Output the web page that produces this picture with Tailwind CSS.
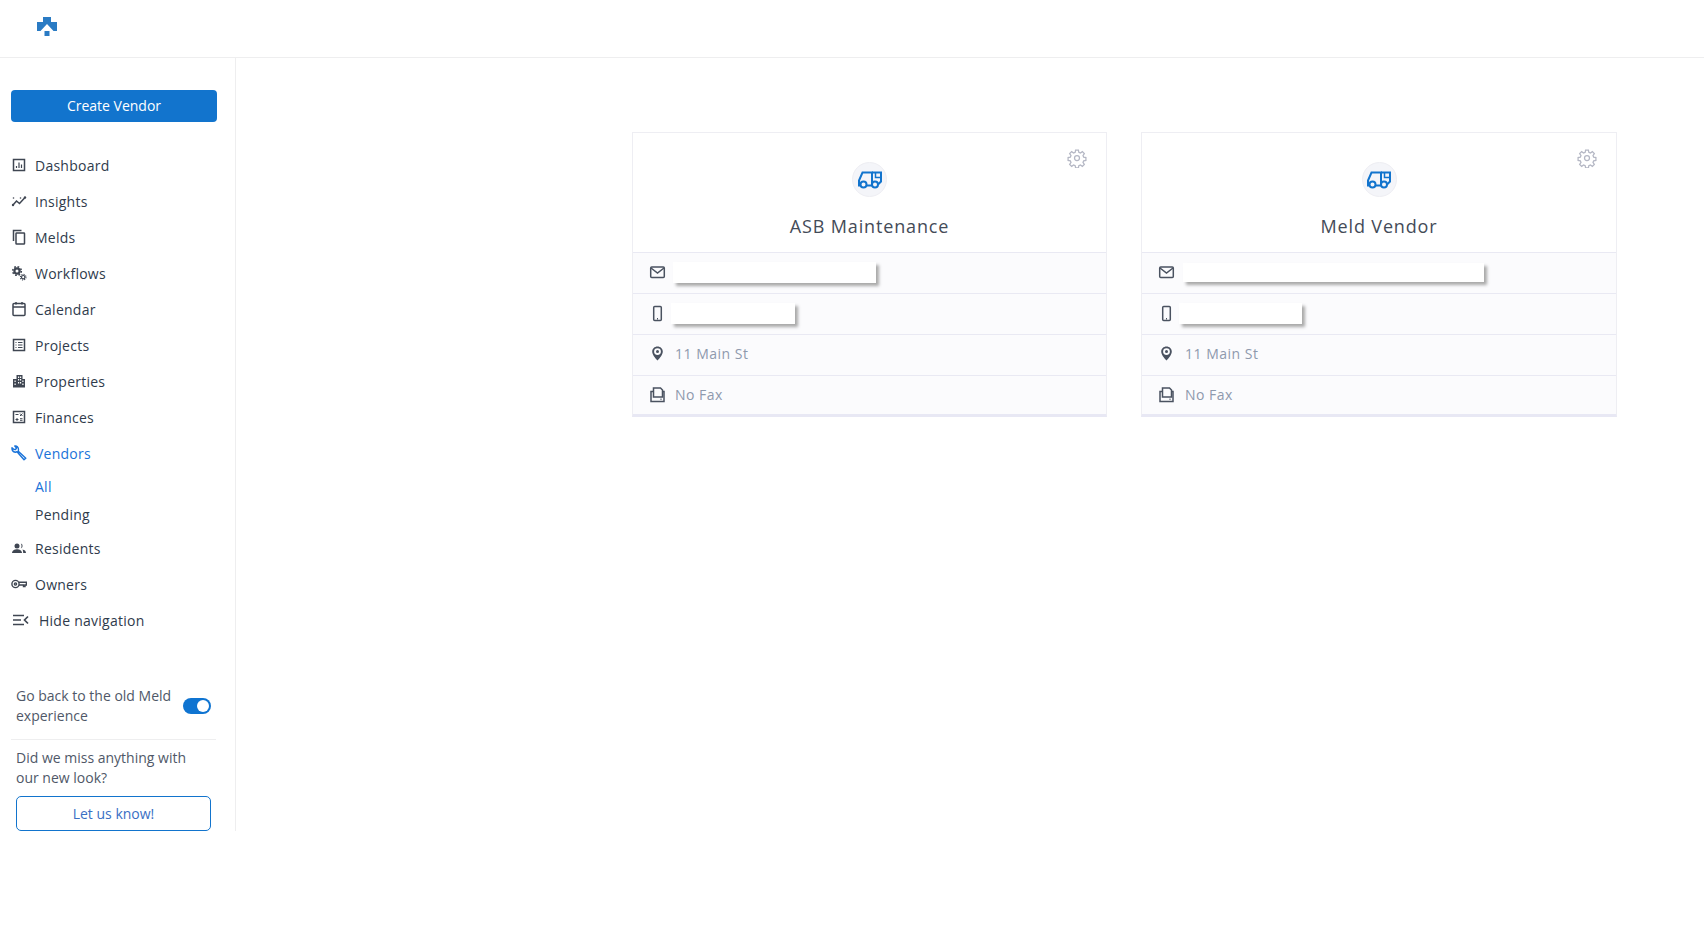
<!DOCTYPE html>
<html lang="en">
    <head>
        <meta charset="UTF-8" />
        <meta name="viewport" content="width=device-width, initial-scale=1.0" />
        <script src="https://cdn.jsdelivr.net/npm/@tailwindcss/browser@4"></script>
        <title>Vendors</title>
    </head>
    <body class="bg-white font-['Open_Sans',sans-serif] text-[14px] text-[#2f3b4c]">
        <header class="h-[58px] border-b border-[#eeeeef] pl-[37px] pt-[17px]">
            <svg class="w-[20px] h-[20px]" viewBox="0 0 20 20" fill="#2a7bc4">
                <path d="M6 0h8v5h6v9h-3.500L10 7 3.500 14H0V5h6z" />
                <rect x="7.500" y="14" width="5" height="5" />
            </svg>
        </header>

        <div class="flex items-start">
            <aside class="w-[236px] h-[773px] shrink-0 border-r border-[#eeeeef] flex flex-col">
                <button class="mt-[32px] ml-[11px] w-[206px] h-[32px] pb-[2px] rounded-[4px] bg-[#1274cd] text-white text-[14px] font-medium">
                    Create Vendor
                </button>

                <nav class="mt-[25px] flex flex-col text-[14px] font-medium tracking-[0.25px]">
                    <a class="h-[36px] flex items-center pl-[11px] gap-[8px]">
                        <svg class="w-[16px] h-[16px] text-[#3f4652]" viewBox="0 0 16 16" fill="none" stroke="currentColor">
                            <rect x="2.500" y="2.500" width="11" height="11" stroke-width="1.500" />
                            <path d="M5.500 11V9M8 11V5.500M10.500 11V7.500" stroke-width="1.200" />
                        </svg>
                        Dashboard
                    </a>
                    <a class="h-[36px] flex items-center pl-[11px] gap-[8px]">
                        <svg class="w-[16px] h-[16px] text-[#3f4652]" viewBox="0 0 16 16" fill="none" stroke="currentColor">
                            <path d="M2 12 5.500 8l3 2.500L14 4.500" stroke-width="1.500" />
                            <circle cx="2" cy="12" r="1.200" fill="currentColor" stroke="none" />
                            <circle cx="14" cy="4.500" r="1.200" fill="currentColor" stroke="none" />
                            <circle cx="2.500" cy="5" r=".8" fill="currentColor" stroke="none" />
                            <circle cx="9.500" cy="5" r=".8" fill="currentColor" stroke="none" />
                        </svg>
                        Insights
                    </a>
                    <a class="h-[36px] flex items-center pl-[11px] gap-[8px]">
                        <svg class="w-[16px] h-[16px] text-[#3f4652]" viewBox="0 0 16 16" fill="none" stroke="currentColor" stroke-width="1.500">
                            <path d="M2.500 12V1.500h8" />
                            <rect x="5" y="4" width="8.500" height="11" rx=".6" />
                        </svg>
                        Melds
                    </a>
                    <a class="h-[36px] flex items-center pl-[11px] gap-[8px]">
                        <svg class="w-[16px] h-[16px] text-[#3f4652]" viewBox="0 0 16 16" fill="none" stroke="currentColor">
                            <circle cx="6" cy="6" r="2.600" stroke-width="2.200" />
                            <circle cx="6" cy="6" r="4.300" stroke-width="1.600" stroke-dasharray="1.700 1.680" />
                            <circle cx="12.200" cy="12.200" r="1.700" stroke-width="1.200" />
                            <circle cx="12.200" cy="12.200" r="2.800" stroke-width="1.100" stroke-dasharray="1.100 1.100" />
                        </svg>
                        Workflows
                    </a>
                    <a class="h-[36px] flex items-center pl-[11px] gap-[8px]">
                        <svg class="w-[16px] h-[16px] text-[#3f4652]" viewBox="0 0 16 16" fill="none" stroke="currentColor" stroke-width="1.500">
                            <rect x="2" y="2.500" width="12" height="12" rx="1" />
                            <path d="M2 6h12M5 1v2.500M11 1v2.500" />
                        </svg>
                        Calendar
                    </a>
                    <a class="h-[36px] flex items-center pl-[11px] gap-[8px]">
                        <svg class="w-[16px] h-[16px] text-[#3f4652]" viewBox="0 0 16 16" fill="none" stroke="currentColor">
                            <rect x="2.500" y="2.500" width="11" height="11" stroke-width="1.500" />
                            <path d="M4.500 5.500h1M7 5.500h4.500M4.500 8h1M7 8h4.500M4.500 10.500h1M7 10.500h4.500" stroke-width="1.200" />
                        </svg>
                        Projects
                    </a>
                    <a class="h-[36px] flex items-center pl-[11px] gap-[8px]">
                        <svg class="w-[16px] h-[16px] text-[#3f4652]" viewBox="0 0 16 16" fill="currentColor">
                            <path fill-rule="evenodd" d="M5.500 2h6v4H14v8.500H2V6h3.500zM7 3.500v1.500h1.200V3.500zm2 0v1.500h1.200V3.500zM7 6v1.500h1.200V6zm2 0v1.500h1.200V6zM3.500 7.500V9h1.200V7.500zM7 9v1.500h1.200V9zm2 0v1.500h1.200V9zm2.300-1.500V9h1.200V7.500zM3.500 10.500V12h1.200v-1.500zm7.800 0V12h1.200v-1.500z" />
                        </svg>
                        Properties
                    </a>
                    <a class="h-[36px] flex items-center pl-[11px] gap-[8px]">
                        <svg class="w-[16px] h-[16px] text-[#3f4652]" viewBox="0 0 16 16" fill="none" stroke="currentColor">
                            <rect x="2.500" y="2.500" width="11" height="11" stroke-width="1.500" />
                            <path d="M4.500 5.500h3M9 4.500l2.500 2.500M11.500 4.500 9 7M4.500 10.500h3M6 9v3M9 9.700h2.500M9 11.300h2.500" stroke-width="1" />
                        </svg>
                        Finances
                    </a>
                    <a class="h-[36px] flex items-center pl-[11px] gap-[8px] text-[#1a73d9]">
                        <svg class="w-[16px] h-[16px]" viewBox="0 0 16 16" fill="none" stroke="currentColor" stroke-width="1.400" stroke-linejoin="round">
                            <path d="M3.800 1 5.500 3 4.500 4.500l-1.800-.2L1 2.800C.8 5 1.800 7 4.300 7.200L6 6.800l7 8 1.800-1.600-7.500-7 .2-1.700C7.500 2.200 5.800.6 3.800 1z" />
                        </svg>
                        Vendors
                    </a>
                    <a class="h-[28px] mt-[1px] flex items-center pl-[35px] text-[#1a73d9]">All</a>
                    <a class="h-[28px] flex items-center pl-[35px]">Pending</a>
                    <a class="h-[36px] mt-[2px] flex items-center pl-[11px] gap-[8px]">
                        <svg class="w-[16px] h-[16px] text-[#3f4652]" viewBox="0 0 16 16" fill="currentColor">
                            <circle cx="6" cy="6" r="2.500" />
                            <path d="M1 13c0-2.500 2.500-3.800 5-3.800s5 1.300 5 3.800z" />
                            <path d="M9.800 3.600a2.500 2.500 0 0 1 0 4.800c1-1.400 1-3.400 0-4.800zM11.500 9.400c2 .3 3.500 1.400 3.500 3.600h-2.800c0-1.500-.2-2.700-.7-3.600z" />
                        </svg>
                        Residents
                    </a>
                    <a class="h-[36px] flex items-center pl-[11px] gap-[8px]">
                        <svg class="w-[16px] h-[16px] text-[#3f4652]" viewBox="0 0 16 16" fill="none" stroke="currentColor" stroke-width="1.400">
                            <circle cx="4.500" cy="8" r="3.600" />
                            <circle cx="4.500" cy="8" r="1.100" />
                            <path d="M8 6.300h7.400V9H14v1.500h-1.500V9H8" />
                        </svg>
                        Owners
                    </a>
                    <a class="h-[36px] flex items-center pl-[12px] gap-[10px]">
                        <svg class="w-[17px] h-[16px] text-[#3f4652]" viewBox="0 0 17 16" fill="none" stroke="currentColor" stroke-width="1.700">
                            <path d="M1 3.500h11M1 8h8M1 12.500h11M16 4.500 12.500 8l3.500 3.500" />
                        </svg>
                        Hide navigation
                    </a>
                </nav>

                <div class="mt-auto ml-[11px] mr-[19px] flex flex-col text-[#4f5868] leading-[20px]">
                    <div class="flex items-center justify-between px-[5px] pb-[13px] border-b border-[#eeeeef]">
                        <span class="w-[160px]">Go back to the old Meld experience</span>
                        <span class="w-[28px] h-[16px] rounded-full bg-[#0f74d1] flex items-center justify-end pr-[2px]">
                            <span class="w-[12px] h-[12px] rounded-full bg-white"></span>
                        </span>
                    </div>
                    <p class="mt-[8px] px-[5px]">Did we miss anything with our new look?</p>
                    <button class="mt-[8px] ml-[5px] w-[195px] h-[35px] rounded-[5px] border border-[#1274cd] text-[#3a6fc4] text-[14px]">
                        Let us know!
                    </button>
                </div>
            </aside>

            <main class="flex-1 pl-[396px] pt-[74px]">
                <div class="w-[985px] grid grid-cols-[475px_476px] gap-[34px]">
                    <section class="h-[285px] border border-[#eeeef3] border-b-[3px] border-b-[#e8e8f4] flex flex-col">
                        <div class="relative h-[119px] flex flex-col items-center">
                            <svg class="absolute right-[19px] top-[15px] w-[20px] h-[20px] text-[#b4b7c4]" viewBox="0 0 24 24" fill="none" stroke="currentColor" stroke-width="1.500">
                                <path d="M10.300 2.500h3.400l.5 2.700 1.900.8 2.300-1.600 2.400 2.400-1.600 2.300.8 1.900 2.700.5v3.400l-2.700.5-.8 1.900 1.600 2.300-2.400 2.400-2.300-1.600-1.900.8-.5 2.700h-3.400l-.5-2.700-1.900-.8-2.300 1.600-2.400-2.400 1.600-2.300-.8-1.900-2.700-.5v-3.400l2.700-.5.8-1.900-1.600-2.300 2.400-2.400 2.300 1.600 1.900-.8z" />
                                <circle cx="12" cy="12" r="3" />
                            </svg>
                            <div class="mt-[29px] w-[35px] h-[35px] rounded-full bg-[#f4f5f9] border border-[#eeeef3] flex items-center justify-center">
                                <svg class="w-[24px] h-[24px] text-[#1274cd]" viewBox="0 0 24 24" fill="none" stroke="currentColor" stroke-width="2">
                                    <path d="M2 17.500H1v-5l3.500-8H14v13H8.500" />
                                    <path d="M14 4.500h9v9l-3 3" />
                                    <path d="M17.500 5v4.500H23" stroke-width="1.500" />
                                    <circle cx="5.500" cy="16.500" r="3" />
                                    <circle cx="17" cy="16.500" r="3" />
                                </svg>
                            </div>
                            <h2 class="mt-[17px] text-[18px] leading-[24px] font-medium tracking-[0.85px] text-[#444b58]">ASB Maintenance</h2>
                        </div>
                        <div class="h-[41px] pb-[2px] border-t border-[#e9e9f3] bg-[#fbfbfd] flex items-center pl-[16px]">
                            <svg class="w-[17px] h-[17px] text-[#4a5260]" viewBox="0 0 17 17" fill="none" stroke="currentColor" stroke-width="1.500">
                                <rect x="1.700" y="3" width="13.600" height="10.500" rx="1" />
                                <path d="M2 4l6.500 5L15 4" />
                            </svg>
                            <span class="ml-[7px] w-[203px] h-[21px] bg-white shadow-[3px_3px_3px_#a9a9a9]"></span>
                        </div>
                        <div class="h-[41px] pb-[2px] border-t border-[#e9e9f3] bg-[#fbfbfd] flex items-center pl-[16px]">
                            <svg class="w-[17px] h-[17px] text-[#4a5260]" viewBox="0 0 17 17" fill="none" stroke="currentColor" stroke-width="1.500">
                                <rect x="4.700" y="1.500" width="7.600" height="14" rx="1" />
                                <path d="M8 13.700h1" />
                            </svg>
                            <span class="ml-[5px] w-[124px] h-[21px] bg-white shadow-[3px_3px_3px_#a9a9a9]"></span>
                        </div>
                        <div class="h-[41px] pb-[3px] border-t border-[#e9e9f3] bg-[#fbfbfd] flex items-center pl-[16px]">
                            <svg class="w-[17px] h-[17px] text-[#4a5260]" viewBox="0 0 17 17" fill="currentColor">
                                <path fill-rule="evenodd" d="M8.500 1.500c3 0 5.300 2.200 5.300 5 0 3-2.800 6.500-5.300 9-2.500-2.500-5.300-6-5.300-9 0-2.800 2.300-5 5.300-5zm0 1.700a3.400 3.400 0 1 0 0 6.800 3.400 3.400 0 0 0 0-6.800z" />
                                <circle cx="8.500" cy="6.600" r="1.500" />
                            </svg>
                            <span class="ml-[9px] text-[#8e99ad] tracking-[0.5px]">11 Main St</span>
                        </div>
                        <div class="flex-1 pb-[1px] border-t border-[#e9e9f3] bg-[#fbfbfd] flex items-center pl-[16px]">
                            <svg class="w-[17px] h-[17px] text-[#4a5260]" viewBox="0 0 17 17" fill="none" stroke="currentColor" stroke-width="1.500">
                                <path d="M4.500 5.500H2v10h13v-10h-1.500" />
                                <path d="M4.500 11V2h7l2 2v7z" />
                                <path d="M11.500 13.200h1" />
                            </svg>
                            <span class="ml-[9px] text-[#8e99ad] tracking-[0.5px]">No Fax</span>
                        </div>
                    </section>

                    <section class="h-[285px] border border-[#eeeef3] border-b-[3px] border-b-[#e8e8f4] flex flex-col">
                        <div class="relative h-[119px] flex flex-col items-center">
                            <svg class="absolute right-[19px] top-[15px] w-[20px] h-[20px] text-[#b4b7c4]" viewBox="0 0 24 24" fill="none" stroke="currentColor" stroke-width="1.500">
                                <path d="M10.300 2.500h3.400l.5 2.700 1.900.8 2.300-1.600 2.400 2.400-1.600 2.300.8 1.900 2.700.5v3.400l-2.700.5-.8 1.900 1.600 2.300-2.400 2.400-2.300-1.600-1.900.8-.5 2.700h-3.400l-.5-2.700-1.900-.8-2.300 1.600-2.400-2.400 1.600-2.300-.8-1.900-2.700-.5v-3.400l2.700-.5.8-1.900-1.600-2.300 2.400-2.400 2.300 1.600 1.900-.8z" />
                                <circle cx="12" cy="12" r="3" />
                            </svg>
                            <div class="mt-[29px] w-[35px] h-[35px] rounded-full bg-[#f4f5f9] border border-[#eeeef3] flex items-center justify-center">
                                <svg class="w-[24px] h-[24px] text-[#1274cd]" viewBox="0 0 24 24" fill="none" stroke="currentColor" stroke-width="2">
                                    <path d="M2 17.500H1v-5l3.500-8H14v13H8.500" />
                                    <path d="M14 4.500h9v9l-3 3" />
                                    <path d="M17.500 5v4.500H23" stroke-width="1.500" />
                                    <circle cx="5.500" cy="16.500" r="3" />
                                    <circle cx="17" cy="16.500" r="3" />
                                </svg>
                            </div>
                            <h2 class="mt-[17px] text-[18px] leading-[24px] font-medium tracking-[0.85px] text-[#444b58]">Meld Vendor</h2>
                        </div>
                        <div class="h-[41px] pb-[2px] border-t border-[#e9e9f3] bg-[#fbfbfd] flex items-center pl-[16px]">
                            <svg class="w-[17px] h-[17px] text-[#4a5260]" viewBox="0 0 17 17" fill="none" stroke="currentColor" stroke-width="1.500">
                                <rect x="1.700" y="3" width="13.600" height="10.500" rx="1" />
                                <path d="M2 4l6.500 5L15 4" />
                            </svg>
                            <span class="ml-[8px] w-[301px] h-[19px] bg-white shadow-[3px_3px_3px_#a9a9a9]"></span>
                        </div>
                        <div class="h-[41px] pb-[2px] border-t border-[#e9e9f3] bg-[#fbfbfd] flex items-center pl-[16px]">
                            <svg class="w-[17px] h-[17px] text-[#4a5260]" viewBox="0 0 17 17" fill="none" stroke="currentColor" stroke-width="1.500">
                                <rect x="4.700" y="1.500" width="7.600" height="14" rx="1" />
                                <path d="M8 13.700h1" />
                            </svg>
                            <span class="ml-[4px] w-[123px] h-[21px] bg-white shadow-[3px_3px_3px_#a9a9a9]"></span>
                        </div>
                        <div class="h-[41px] pb-[3px] border-t border-[#e9e9f3] bg-[#fbfbfd] flex items-center pl-[16px]">
                            <svg class="w-[17px] h-[17px] text-[#4a5260]" viewBox="0 0 17 17" fill="currentColor">
                                <path fill-rule="evenodd" d="M8.500 1.500c3 0 5.300 2.200 5.300 5 0 3-2.800 6.500-5.300 9-2.500-2.500-5.300-6-5.300-9 0-2.800 2.300-5 5.300-5zm0 1.700a3.400 3.400 0 1 0 0 6.800 3.400 3.400 0 0 0 0-6.800z" />
                                <circle cx="8.500" cy="6.600" r="1.500" />
                            </svg>
                            <span class="ml-[10px] text-[#8e99ad] tracking-[0.5px]">11 Main St</span>
                        </div>
                        <div class="flex-1 pb-[1px] border-t border-[#e9e9f3] bg-[#fbfbfd] flex items-center pl-[16px]">
                            <svg class="w-[17px] h-[17px] text-[#4a5260]" viewBox="0 0 17 17" fill="none" stroke="currentColor" stroke-width="1.500">
                                <path d="M4.500 5.500H2v10h13v-10h-1.500" />
                                <path d="M4.500 11V2h7l2 2v7z" />
                                <path d="M11.500 13.200h1" />
                            </svg>
                            <span class="ml-[10px] text-[#8e99ad] tracking-[0.5px]">No Fax</span>
                        </div>
                    </section>
                </div>
            </main>
        </div>
    </body>
</html>
